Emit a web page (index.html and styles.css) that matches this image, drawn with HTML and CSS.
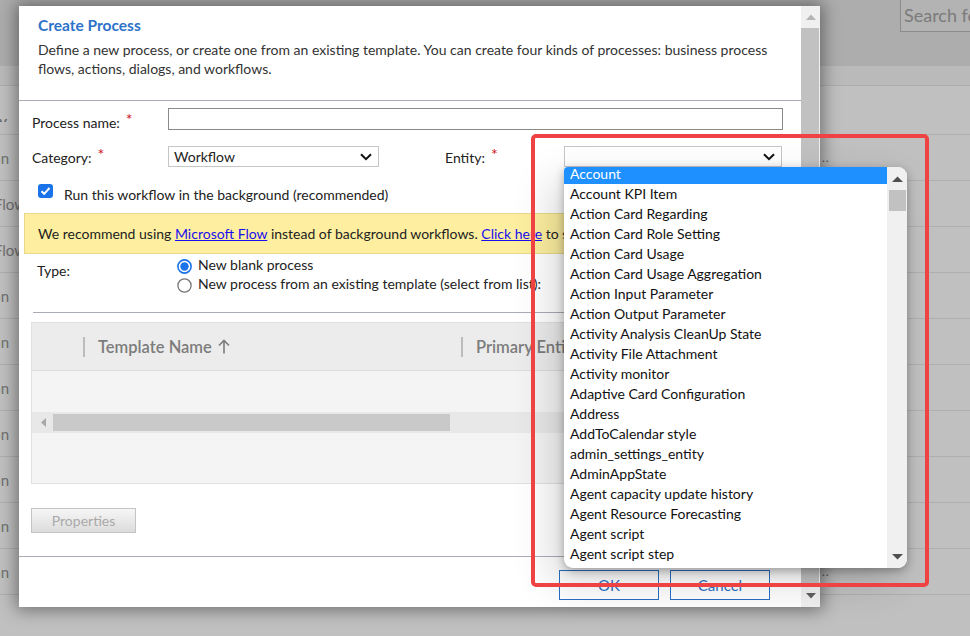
FILE: index.html
```html
<!DOCTYPE html>
<html>
<head>
<meta charset="utf-8">
<title>Create Process</title>
<link rel="stylesheet" href="styles.css">
</head>
<body>
<div class="page">
  <div class="topband"><div class="search">Search fo</div></div>
  <div class="colhead"></div>
  <div class="rows">
    <div class="row"><div class="lcell"><span class="lt head">Category</span></div></div>
    <div class="row"><div class="lcell"><span class="lt short">Action</span></div><span class="rcell">..</span></div>
    <div class="row"><div class="lcell"><span class="lt cut">Flow</span></div></div>
    <div class="row"><div class="lcell"><span class="lt cut">Flow</span></div></div>
    <div class="row"><div class="lcell"><span class="lt short">Action</span></div></div>
    <div class="row"><div class="lcell"><span class="lt short">Action</span></div></div>
    <div class="row"><div class="lcell"><span class="lt short">Action</span></div></div>
    <div class="row"><div class="lcell"><span class="lt short">Action</span></div></div>
    <div class="row"><div class="lcell"><span class="lt short">Action</span></div></div>
    <div class="row"><div class="lcell"><span class="lt short">Action</span></div></div>
    <div class="row"><div class="lcell"><span class="lt short">Action</span></div><span class="rcell">..</span></div>
  </div>
</div>

<div class="dialog">
  <div class="main">
    <div class="head">
      <div class="title">Create Process</div>
      <div class="desc">Define a new process, or create one from an existing template. You can create four kinds of processes: business process<br>flows, actions, dialogs, and workflows.</div>
    </div>

    <div class="form">
      <div class="frow r1">
        <div class="lbl">Process name:<span class="req">*</span></div>
        <div class="input"></div>
      </div>
      <div class="frow r2">
        <div class="lbl l2">Category:<span class="req">*</span></div>
        <div class="select cat"><span>Workflow</span>
          <svg class="chev" width="12" height="8" viewBox="0 0 12 8"><path d="M1 1.2 L6 6.2 L11 1.2" fill="none" stroke="#111" stroke-width="2"/></svg>
        </div>
        <div class="lbl l2 lent">Entity:<span class="req">*</span></div>
        <div class="select ent"><span></span>
          <svg class="chev" width="12" height="8" viewBox="0 0 12 8"><path d="M1 1.2 L6 6.2 L11 1.2" fill="none" stroke="#111" stroke-width="2"/></svg>
        </div>
      </div>
      <div class="frow r3">
        <div class="checkbox">
          <svg width="15" height="14" viewBox="0 0 15 14"><rect x="0" y="0" width="15" height="14" rx="3" fill="#1a73e8"/><path d="M3.5 7.2 L6.2 9.8 L11.5 4" fill="none" stroke="#fff" stroke-width="2"/></svg>
        </div>
        <div class="cblabel">Run this workflow in the background (recommended)</div>
      </div>
    </div>

    <div class="banner">We recommend using <a class="lnk">Microsoft Flow</a> instead of background workflows. <a class="lnk">Click here</a> to st</div>

    <div class="typeblock">
      <div class="typelbl">Type:</div>
      <div class="radios">
        <div class="ropt">
          <svg class="radio" width="15" height="15" viewBox="0 0 15 15"><circle cx="7.5" cy="7.5" r="6.6" fill="#fff" stroke="#1a73e8" stroke-width="1.6"/><circle cx="7.5" cy="7.5" r="4.2" fill="#1a73e8"/></svg>
          <span>New blank process</span>
        </div>
        <div class="ropt">
          <svg class="radio" width="15" height="15" viewBox="0 0 15 15"><circle cx="7.5" cy="7.5" r="6.6" fill="#fff" stroke="#767676" stroke-width="1.3"/></svg>
          <span>New process from an existing template (select from list):</span>
        </div>
      </div>
    </div>

    <div class="sep"></div>

    <div class="grid">
      <div class="ghead">
        <div class="gpad"></div>
        <div class="gsep"></div>
        <div class="gcol gname">Template Name
          <svg class="arrow" width="12" height="15" viewBox="0 0 12 15"><path d="M6 14.5 V1.5 M1 6.5 L6 1.5 L11 6.5" fill="none" stroke="#7c7c7c" stroke-width="1.6"/></svg>
        </div>
        <div class="gsep"></div>
        <div class="gcol">Primary Entity</div>
      </div>
      <div class="gbody">
        <div class="gempty"></div>
        <div class="hscroll">
          <svg class="harrow" width="6" height="9" viewBox="0 0 6 9"><path d="M5 0 L0 4.5 L5 9 Z" fill="#a8a8a8"/></svg>
          <div class="hthumb"></div>
        </div>
      </div>
    </div>

    <div class="propbtn">Properties</div>

    <div class="footer">
      <div class="btn">OK</div>
      <div class="btn">Cancel</div>
    </div>
  </div>
  <div class="vscroll">
    <div class="vup"><svg width="10" height="6" viewBox="0 0 10 6"><path d="M0 6 L5 0.5 L10 6 Z" fill="#b4b4b4"/></svg></div>
    <div class="vthumb"></div>
    <div class="vdown"><svg width="10" height="6" viewBox="0 0 10 6"><path d="M0 0 L5 5.5 L10 0 Z" fill="#606060"/></svg></div>
  </div>
</div>

<div class="dd">
  <div class="ddlist">
    <div class="ddi sel">Account</div>
    <div class="ddi">Account KPI Item</div>
    <div class="ddi">Action Card Regarding</div>
    <div class="ddi">Action Card Role Setting</div>
    <div class="ddi">Action Card Usage</div>
    <div class="ddi">Action Card Usage Aggregation</div>
    <div class="ddi">Action Input Parameter</div>
    <div class="ddi">Action Output Parameter</div>
    <div class="ddi">Activity Analysis CleanUp State</div>
    <div class="ddi">Activity File Attachment</div>
    <div class="ddi">Activity monitor</div>
    <div class="ddi">Adaptive Card Configuration</div>
    <div class="ddi">Address</div>
    <div class="ddi">AddToCalendar style</div>
    <div class="ddi">admin_settings_entity</div>
    <div class="ddi">AdminAppState</div>
    <div class="ddi">Agent capacity update history</div>
    <div class="ddi">Agent Resource Forecasting</div>
    <div class="ddi">Agent script</div>
    <div class="ddi">Agent script step</div>
  </div>
  <div class="ddscroll">
    <div class="ddup"><svg width="11" height="6" viewBox="0 0 11 6"><path d="M0 6 L5.5 0.5 L11 6 Z" fill="#505050"/></svg></div>
    <div class="ddthumb"></div>
    <div class="ddfill"></div>
    <div class="dddown"><svg width="11" height="6" viewBox="0 0 11 6"><path d="M0 0 L5.5 5.5 L11 0 Z" fill="#505050"/></svg></div>
  </div>
</div>

<div class="annot"></div>
</body>
</html>
```

FILE: styles.css
```css
html, body {
  margin: 0;
  padding: 0;
}
body {
  width: 970px;
  height: 636px;
  overflow: hidden;
  position: relative;
  background: #c0c0c0;
  font-family: Lato, "Noto Sans", "Liberation Sans", sans-serif;
  font-size: 14px;
  color: #222;
}

/* ---------- dimmed page behind ---------- */
.page {
  line-height: 20px;
}
.topband {
  height: 66px;
  background: #adadad;
  display: flex;
  justify-content: flex-end;
  align-items: flex-start;
}
.search {
  width: 70px;
  height: 32px;
  box-sizing: border-box;
  border: 1px solid #8c8c8c;
  border-top: none;
  border-right: none;
  background: #b3b3b3;
  color: #7b7b7b;
  font-size: 18px;
  line-height: 30px;
  padding-left: 3px;
  white-space: nowrap;
  overflow: hidden;
}
.colhead {
  height: 20px;
  box-sizing: border-box;
  background: #bababa;
  border-bottom: 1px solid #adadad;
}
.rows {
  padding-top: 3px;
}
.row {
  height: 46px;
  box-sizing: border-box;
  border-bottom: 1px solid #afafaf;
  display: flex;
  align-items: center;
}
.lcell {
  flex: none;
  width: 19px;
  height: 20px;
  overflow: hidden;
  display: flex;
  justify-content: flex-end;
  white-space: nowrap;
  color: #707070;
  font-size: 15px;
}
.lt { flex: none; }
.lt.head { font-weight: 600; margin-right: -7px; color: #6c6c6c; font-size: 16px; }
.lt.short { margin-right: 10px; }
.lt.cut { margin-right: -7px; }
.rcell {
  margin-left: 803px;
  font-size: 12px;
  color: #555;
  letter-spacing: 1px;
}

/* ---------- dialog ---------- */
.dialog {
  position: absolute;
  left: 19px;
  top: 6px;
  width: 801px;
  height: 601px;
  background: #fff;
  display: flex;
  box-shadow: 0 0 16px 3px rgba(0, 0, 0, 0.42);
}
.main {
  width: 782px;
  display: flex;
  flex-direction: column;
}
.head {
  height: 95px;
  box-sizing: border-box;
  border-bottom: 1px solid #a9adb4;
  padding: 9px 19px 0;
}
.title {
  font-weight: 700;
  font-size: 15.5px;
  line-height: 20px;
  color: #2d72c9;
}
.desc {
  margin-top: 5px;
  line-height: 19px;
  color: #333;
  white-space: nowrap;
}
.form {
  padding-top: 7px;
}
.frow {
  display: flex;
  align-items: flex-start;
  margin-left: 13px;
}
.r1 {
  height: 22px;
}
.lbl {
  flex: none;
  width: 136px;
  line-height: 20px;
  padding-top: 5px;
  color: #222;
}
.req {
  color: #d0101b;
  font-size: 16px;
  margin-left: 6px;
  line-height: 0;
  vertical-align: 3px;
}
.input {
  width: 615px;
  height: 22px;
  box-sizing: border-box;
  border: 1px solid #8a8a8a;
}
.r2 {
  margin-top: 16px;
  height: 21px;
}
.l2 {
  padding-top: 2px;
}
.select {
  flex: none;
  height: 21px;
  box-sizing: border-box;
  border: 1px solid #c6c6c6;
  display: flex;
  align-items: center;
  justify-content: space-between;
  padding: 0 6px 0 5px;
  color: #222;
}
.select.cat { width: 211px; }
.select.ent { width: 218px; }
.lent {
  width: 119px;
  margin-left: 66px;
}
.r3 {
  margin-top: 14px;
  margin-left: 19px;
}
.checkbox {
  margin-top: 3px;
  height: 14px;
  line-height: 0;
}
.cblabel {
  margin-left: 11px;
  margin-top: 4px;
  line-height: 20px;
}
.banner {
  margin: 8px 6px 0 5px;
  height: 41px;
  box-sizing: border-box;
  background: #fdef9f;
  border: 1px solid #e6d98c;
  padding: 10px 0 0 13px;
  line-height: 20px;
  white-space: nowrap;
  overflow: hidden;
  color: #222;
}
.lnk {
  color: #1a0dee;
  text-decoration: underline;
}
.typeblock {
  margin-top: 1px;
  display: flex;
  align-items: flex-start;
}
.typelbl {
  flex: none;
  width: 140px;
  margin-left: 18px;
  padding-top: 6px;
  line-height: 20px;
}
.radios {
  display: flex;
  flex-direction: column;
}
.ropt {
  height: 19px;
  display: flex;
  align-items: center;
  line-height: 19px;
  white-space: nowrap;
}
.radio {
  margin-top: 3px;
  flex: none;
}
.ropt span {
  margin-left: 6px;
}
.sep {
  margin: 19px 1px 0 14px;
  border-top: 1px solid #a9adb4;
}
.grid {
  margin: 9px 1px 0 12px;
  border: 1px solid #e0e0e0;
}
.ghead {
  height: 48px;
  box-sizing: border-box;
  background: #ececec;
  border-bottom: 1px solid #dcdcdc;
  display: flex;
  align-items: center;
  color: #7c7c7c;
  font-size: 16.5px;
  font-weight: 600;
  white-space: nowrap;
}
.gpad {
  width: 51px;
  flex: none;
}
.gsep {
  flex: none;
  width: 2px;
  height: 20px;
  background: #bcbcbc;
}
.gcol {
  padding-left: 13px;
  display: flex;
  align-items: center;
}
.gname {
  width: 363px;
  flex: none;
}
.arrow {
  margin-left: 6px;
  flex: none;
}
.gbody {
  height: 112px;
  background: #f4f4f4;
}
.gempty {
  height: 41px;
}
.hscroll {
  height: 21px;
  background: #e8e8e8;
  display: flex;
  align-items: center;
}
.harrow {
  margin-left: 9px;
  flex: none;
}
.hthumb {
  margin-left: 6px;
  width: 397px;
  height: 17px;
  background: #c9c9c9;
}
.propbtn {
  margin: 24px 0 0 12px;
  width: 105px;
  height: 25px;
  box-sizing: border-box;
  border: 1px solid #c4c4c4;
  background: linear-gradient(#f6f6f6, #dcdcdc);
  color: #a9a9a9;
  text-align: center;
  line-height: 23px;
}
.footer {
  margin-top: auto;
  border-top: 1px solid #a9adb4;
  height: 51px;
  box-sizing: border-box;
  padding: 13px 31px 0 0;
  display: flex;
  justify-content: flex-end;
  gap: 11px;
}
.btn {
  width: 100px;
  height: 30px;
  box-sizing: border-box;
  border: 1px solid #2a6fc4;
  color: #2a6fc4;
  text-align: center;
  line-height: 28px;
  font-size: 15px;
}
.vscroll {
  width: 19px;
  background: #f0f0f0;
  display: flex;
  flex-direction: column;
}
.vup {
  height: 22px;
  display: flex;
  align-items: center;
  justify-content: center;
}
.vthumb {
  flex: 1;
  margin: 0 1px 0 0;
  background: #c1c1c1;
}
.vdown {
  height: 23px;
  display: flex;
  align-items: center;
  justify-content: center;
}

/* ---------- open dropdown ---------- */
.dd {
  position: absolute;
  left: 564px;
  top: 167px;
  width: 343px;
  height: 401px;
  background: #fff;
  border-radius: 4px 9px 9px 9px;
  overflow: hidden;
  display: flex;
  box-shadow: 0 3px 10px rgba(0, 0, 0, 0.3), -12px 14px 40px rgba(0, 0, 0, 0.16);
}
.ddlist {
  width: 323px;
  margin-top: -3px;
}
.ddi {
  height: 20px;
  line-height: 20px;
  padding-left: 6px;
  color: #111;
  white-space: nowrap;
}
.ddi.sel {
  background: #1e90ff;
  color: #fff;
}
.ddscroll {
  width: 20px;
  background: #f0f0f0;
  display: flex;
  flex-direction: column;
  align-items: center;
}
.ddup {
  height: 23px;
  display: flex;
  align-items: center;
}
.ddthumb {
  width: 17px;
  height: 21px;
  background: #c1c1c1;
}
.ddfill {
  flex: 1;
}
.dddown {
  height: 22px;
  display: flex;
  align-items: center;
}

/* ---------- annotation frame ---------- */
.annot {
  position: absolute;
  left: 531px;
  top: 134px;
  width: 398px;
  height: 453px;
  box-sizing: border-box;
  border: 4px solid #ef4343;
  border-radius: 5px;
}
```
